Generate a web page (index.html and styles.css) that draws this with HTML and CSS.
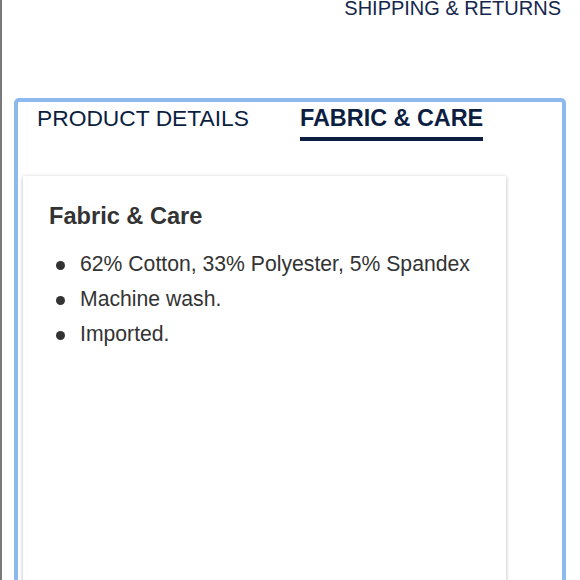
FILE: index.html
```
<!DOCTYPE html>
<html>
<head>
<meta charset="utf-8">
<link rel="stylesheet" href="styles.css">
</head>
<body>
<div class="page">
  <div class="top-link">SHIPPING &amp; RETURNS</div>
  <div class="panel">
    <div class="tabs">
      <div class="tab">PRODUCT DETAILS</div>
      <div class="tab active">FABRIC &amp; CARE</div>
    </div>
    <div class="card">
      <h2 class="card-title">Fabric &amp; Care</h2>
      <ul class="list">
        <li>62% Cotton, 33% Polyester, 5% Spandex</li>
        <li>Machine wash.</li>
        <li>Imported.</li>
      </ul>
    </div>
  </div>
</div>
</body>
</html>
```
FILE: styles.css
```
html, body {
  margin: 0;
  padding: 0;
  background: #fff;
  overflow: hidden;
}
body {
  font-family: "Liberation Sans", Arial, Helvetica, sans-serif;
}
.page {
  border-left: 2px solid #7a7a7a;
  height: 580px;
  overflow: hidden;
}
.top-link {
  line-height: 16px;
  height: 18px;
  font-size: 20px;
  color: #14264d;
  text-align: right;
  padding-right: 19px;
}
.panel {
  margin-top: 80px;
  margin-left: 12px;
  width: 544px;
  border: 4px solid #8cbaef;
  border-radius: 5px;
  height: 700px;
}
.tabs {
  display: flex;
  align-items: flex-start;
  gap: 51px;
  padding-top: 2px;
  padding-left: 19px;
}
.tab {
  font-size: 22.8px;
  line-height: 28px;
  color: #0c1e42;
}
.tab.active {
  font-size: 23.4px;
  font-weight: bold;
  padding-bottom: 5px;
  border-bottom: 4px solid #0c1e42;
}
.card {
  margin-top: 35px;
  margin-left: 5px;
  width: 483px;
  min-height: 500px;
  background: #fff;
  box-shadow: 0 1px 4px rgba(0, 0, 0, 0.28);
  padding-top: 26px;
  box-sizing: border-box;
}
.card-title {
  margin: 0;
  padding-left: 26px;
  font-size: 23.6px;
  line-height: 28px;
  font-weight: bold;
  color: #333;
}
.list {
  list-style: none;
  margin: 16px 0 0 0;
  padding: 0 0 0 57px;
  color: #333;
  font-size: 21.2px;
  line-height: 35px;
}
.list li {
  position: relative;
}
.list li::before {
  content: "";
  position: absolute;
  left: -24px;
  top: 15px;
  width: 9px;
  height: 9px;
  border-radius: 50%;
  background: #333;
}
```
